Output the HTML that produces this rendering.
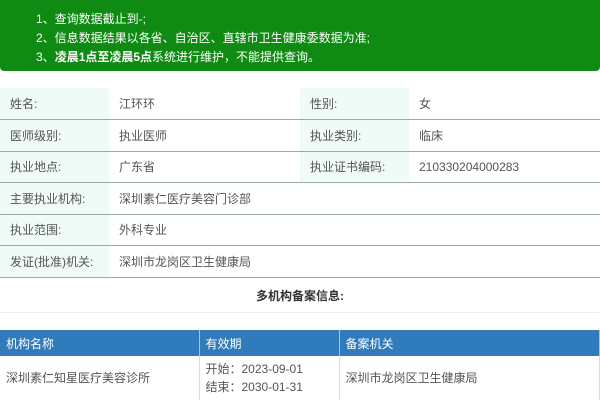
<!DOCTYPE html>
<html><head><meta charset="utf-8"><style>
*{margin:0;padding:0;box-sizing:border-box}
body{width:600px;height:400px;overflow:hidden;background:#fff;font-family:"Liberation Sans","Noto Sans CJK SC",sans-serif;font-size:12px;color:#555}
.notice{position:absolute;left:0;top:0;width:600px;height:71px;background:#0f8a12;border-radius:0 0 4px 4px;color:#fff;font-size:12px}
.notice div{position:absolute;left:36px}
table{border-collapse:collapse;position:absolute;left:0;width:600px}
#info{top:88px}
#info td{height:31.5px;border-bottom:1px solid #9aaba8;padding-left:10px;vertical-align:middle}
#info td.l{background:#effbf7}
.title{position:absolute;top:287px;width:600px;text-align:center;font-weight:bold;color:#333;font-size:12px}
.line{position:absolute;top:312px;left:0;width:600px;border-top:1px solid #eee}
#multi{top:330px}
#multi th{background:#2f7bbb;color:#fff;font-weight:normal;text-align:left;height:26px;padding-left:6px;border-right:1px solid #9cc}
#multi td{height:44px;padding-left:6px;border-right:1px solid #ddd;line-height:18px;vertical-align:middle}
</style></head><body>
<div class="notice">
<div style="top:10px">1、查询数据截止到-;</div>
<div style="top:29px">2、信息数据结果以各省、自治区、直辖市卫生健康委数据为准;</div>
<div style="top:48px">3、<b>凌晨1点至凌晨5点</b>系统进行维护，不能提供查询。</div>
</div>
<table id="info">
<colgroup><col style="width:109px"><col style="width:191px"><col style="width:109px"><col></colgroup>
<tr><td class="l">姓名:</td><td>江环环</td><td class="l">性别:</td><td>女</td></tr>
<tr><td class="l">医师级别:</td><td>执业医师</td><td class="l">执业类别:</td><td>临床</td></tr>
<tr><td class="l">执业地点:</td><td>广东省</td><td class="l">执业证书编码:</td><td>210330204000283</td></tr>
<tr><td class="l">主要执业机构:</td><td colspan="3">深圳素仁医疗美容门诊部</td></tr>
<tr><td class="l">执业范围:</td><td colspan="3">外科专业</td></tr>
<tr><td class="l">发证(批准)机关:</td><td colspan="3">深圳市龙岗区卫生健康局</td></tr>
</table>
<div class="title">多机构备案信息:</div>
<div class="line"></div>
<table id="multi">
<colgroup><col style="width:199px"><col style="width:140px"><col></colgroup>
<tr><th>机构名称</th><th>有效期</th><th>备案机关</th></tr>
<tr><td>深圳素仁知星医疗美容诊所</td><td>开始：2023-09-01<br>结束：2030-01-31</td><td>深圳市龙岗区卫生健康局</td></tr>
</table>
</body></html>
